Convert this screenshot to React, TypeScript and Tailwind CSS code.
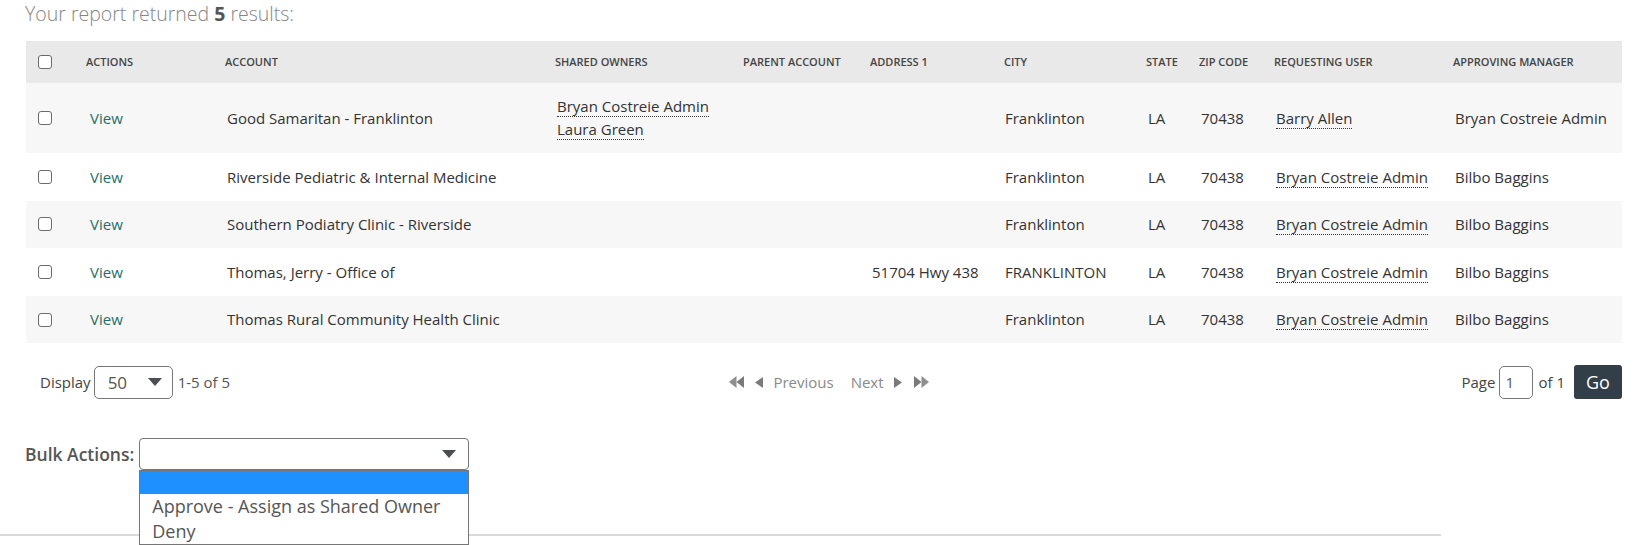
import React from "react";

type Row = {
  account: string;
  owners: string[];
  parent: string;
  address: string;
  city: string;
  state: string;
  zip: string;
  requesting: string;
  approving: string;
};

const rows: Row[] = [
  {
    account: "Good Samaritan - Franklinton",
    owners: ["Bryan Costreie Admin", "Laura Green"],
    parent: "",
    address: "",
    city: "Franklinton",
    state: "LA",
    zip: "70438",
    requesting: "Barry Allen",
    approving: "Bryan Costreie Admin",
  },
  {
    account: "Riverside Pediatric & Internal Medicine",
    owners: [],
    parent: "",
    address: "",
    city: "Franklinton",
    state: "LA",
    zip: "70438",
    requesting: "Bryan Costreie Admin",
    approving: "Bilbo Baggins",
  },
  {
    account: "Southern Podiatry Clinic - Riverside",
    owners: [],
    parent: "",
    address: "",
    city: "Franklinton",
    state: "LA",
    zip: "70438",
    requesting: "Bryan Costreie Admin",
    approving: "Bilbo Baggins",
  },
  {
    account: "Thomas, Jerry - Office of",
    owners: [],
    parent: "",
    address: "51704 Hwy 438",
    city: "FRANKLINTON",
    state: "LA",
    zip: "70438",
    requesting: "Bryan Costreie Admin",
    approving: "Bilbo Baggins",
  },
  {
    account: "Thomas Rural Community Health Clinic",
    owners: [],
    parent: "",
    address: "",
    city: "Franklinton",
    state: "LA",
    zip: "70438",
    requesting: "Bryan Costreie Admin",
    approving: "Bilbo Baggins",
  },
];

const COLS =
  "grid grid-cols-[52px_139px_330px_188px_127px_134px_142px_53px_75px_179px_177px]";

function Checkbox() {
  return (
    <span className="block w-[14px] h-[14px] rounded-[3px] border-[1.5px] border-[#6b6b6b] bg-white" />
  );
}

function Dotted({ children }: { children: React.ReactNode }) {
  return (
    <span className="inline-block leading-[20px] border-b border-dotted border-[#333]">
      {children}
    </span>
  );
}

function Caret({ className }: { className: string }) {
  return (
    <svg className={className} viewBox="0 0 14 8" fill="#4a4f54">
      <path d="M0 0h14L7 8z" />
    </svg>
  );
}

function TriLeft() {
  return (
    <svg width="8" height="11" viewBox="0 0 8 11" fill="#7a7a7a">
      <path d="M8 0v11L0 5.5z" />
    </svg>
  );
}
function TriRight() {
  return (
    <svg width="8" height="11" viewBox="0 0 8 11" fill="#7a7a7a">
      <path d="M0 0v11l8-5.5z" />
    </svg>
  );
}
function DoubleLeft() {
  return (
    <svg width="15" height="12" viewBox="0 0 15 12" fill="#7a7a7a">
      <path d="M7.5 0v12L0 6z" opacity="0.85" />
      <path d="M15 0v12L7.5 6z" />
    </svg>
  );
}
function DoubleRight() {
  return (
    <svg width="15" height="12" viewBox="0 0 15 12" fill="#7a7a7a">
      <path d="M0 0v12l7.5-6z" />
      <path d="M7.5 0v12L15 6z" opacity="0.85" />
    </svg>
  );
}

export default function App() {
  const headers = [
    "Actions",
    "Account",
    "Shared Owners",
    "Parent Account",
    "Address 1",
    "City",
    "State",
    "Zip Code",
    "Requesting User",
    "Approving Manager",
  ];
  return (
    <div className="w-[1641px] h-[545px] overflow-hidden bg-white font-['Open_Sans',sans-serif] text-[#333]">
      <div className="pl-[25px] text-[19.5px] leading-[27px] font-light text-[#858585]">
        Your report returned <span className="font-bold text-[#555]">5</span> results:
      </div>

      <div className="ml-[26px] mt-[14px] w-[1596px]">
        {/* header */}
        <div className={`${COLS} h-[42px] bg-[#e9e9e9] items-center`}>
          <div className="pl-[12px]">
            <Checkbox />
          </div>
          {headers.map((h) => (
            <div
              key={h}
              className="pl-[8px] text-[11px] font-semibold uppercase text-[#444] whitespace-nowrap"
            >
              {h}
            </div>
          ))}
        </div>

        {rows.map((r, i) => (
          <div
            key={i}
            className={`${COLS} items-center text-[15px] ${
              i === 0 ? "h-[70px]" : "h-[47.6px]"
            } ${i % 2 === 0 ? "bg-[#f7f7f7]" : "bg-white"}`}
          >
            <div className="pl-[12px]">
              <Checkbox />
            </div>
            <div className="pl-[12px] text-[#22706a]">View</div>
            <div className="pl-[10px] whitespace-nowrap">{r.account}</div>
            <div className="pl-[10px] flex flex-col items-start gap-[2px]">
              {r.owners.map((o) => (
                <Dotted key={o}>{o}</Dotted>
              ))}
            </div>
            <div className="pl-[10px]">{r.parent}</div>
            <div className="pl-[10px] whitespace-nowrap">{r.address}</div>
            <div className="pl-[9px] whitespace-nowrap">{r.city}</div>
            <div className="pl-[10px]">{r.state}</div>
            <div className="pl-[10px]">{r.zip}</div>
            <div className="pl-[10px] whitespace-nowrap">
              <Dotted>{r.requesting}</Dotted>
            </div>
            <div className="pl-[10px] whitespace-nowrap">{r.approving}</div>
          </div>
        ))}

        {/* pagination */}
        <div className="mt-[22px] flex items-center h-[34px] text-[15px]">
          <div className="flex-1 flex items-center pl-[14px]">
            <span className="text-[#444]">Display</span>
            <div className="ml-[3px] w-[79px] h-[33px] rounded-[5px] border border-[#777] flex items-center justify-between pl-[13px] pr-[10px]">
              <span className="text-[17px] text-[#555]">50</span>
              <Caret className="w-[14px] h-[8px]" />
            </div>
            <span className="ml-[5px] text-[#555]">1-5 of 5</span>
          </div>
          <div className="flex items-center pr-[4px] text-[#8a8a8a]">
            <DoubleLeft />
            <span className="ml-[11px]">
              <TriLeft />
            </span>
            <span className="ml-[10px]">Previous</span>
            <span className="ml-[17px]">Next</span>
            <span className="ml-[10px]">
              <TriRight />
            </span>
            <span className="ml-[12px]">
              <DoubleRight />
            </span>
          </div>
          <div className="flex-1 flex items-center justify-end">
            <span className="text-[#444]">Page</span>
            <div className="ml-[4px] w-[34px] h-[33px] rounded-[5px] border border-[#777] flex items-center pl-[5px] text-[#555]">
              1
            </div>
            <span className="ml-[5px] text-[#444]">of 1</span>
            <button className="ml-[9px] w-[48px] h-[34px] rounded-[3px] bg-[#323e48] text-white text-[18px] leading-none">
              Go
            </button>
          </div>
        </div>
      </div>

      {/* bulk actions */}
      <div className="mt-[39px] pl-[25px] flex items-center">
        <span className="text-[17.5px] font-semibold text-[#555]">Bulk Actions:</span>
        <div className="relative ml-[5px]">
          <div className="w-[330px] h-[32px] rounded-[4px] border border-[#767676] bg-white flex items-center justify-end pr-[11px]">
            <Caret className="w-[16px] h-[8px]" />
          </div>
          <div className="absolute left-0 top-[32px] w-[330px] bg-white border border-[#767676] z-10 text-[18px] text-[#555]">
            <div className="h-[23px] bg-[#1e90ff]" />
            <div className="h-[25px] leading-[25px] pl-[12px] whitespace-nowrap">
              Approve - Assign as Shared Owner
            </div>
            <div className="h-[25px] leading-[25px] pl-[12px]">Deny</div>
          </div>
        </div>
      </div>

      <div className="mt-[64px] w-[1441px] border-t-2 border-[#dadada]" />
    </div>
  );
}
